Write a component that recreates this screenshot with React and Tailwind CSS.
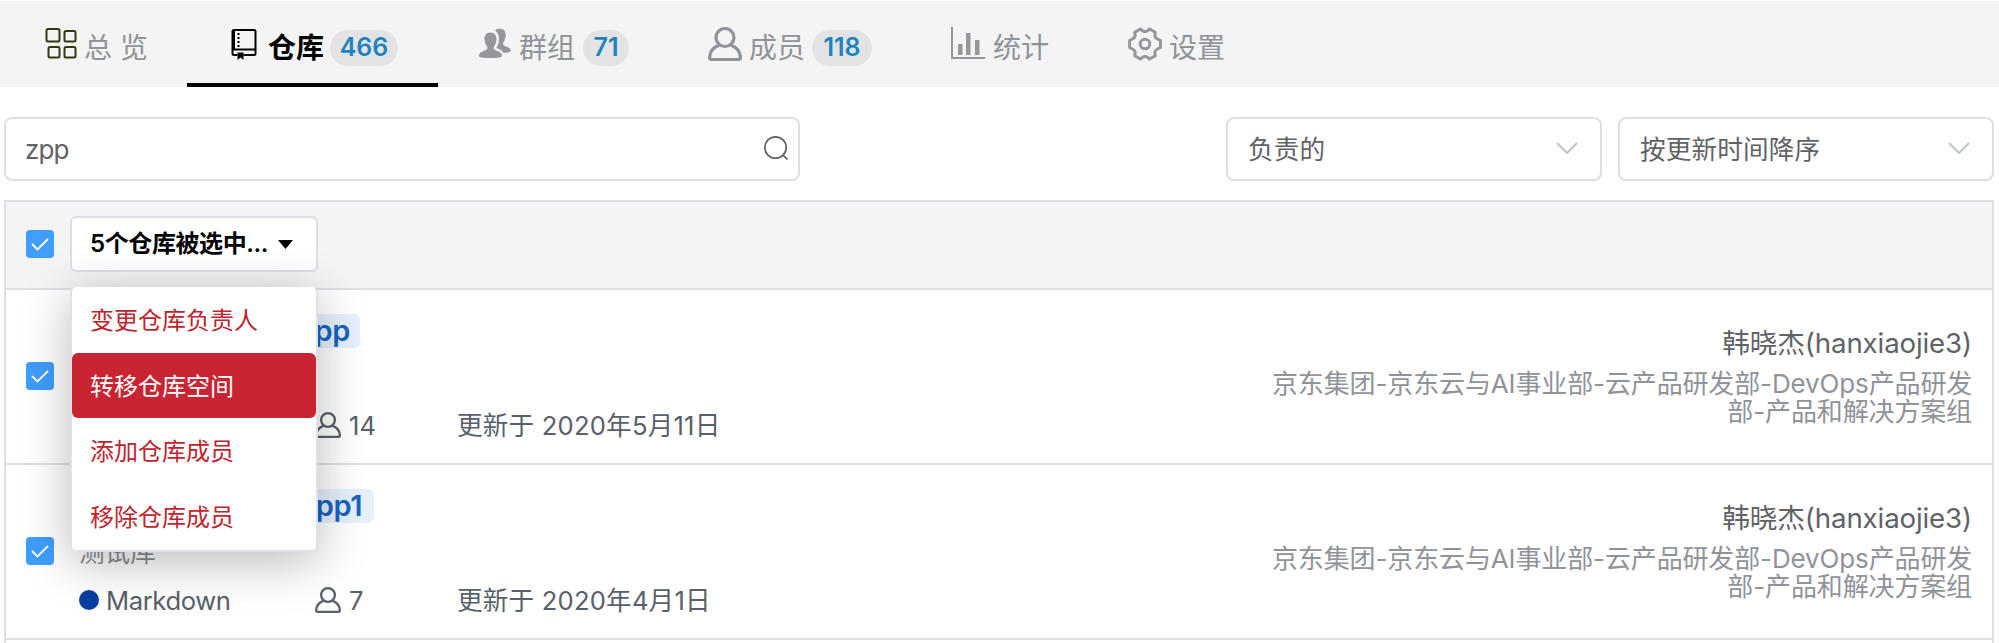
import React from "react";

const PersonIcon = ({ className, strokeWidth }) => (
  <svg className={className} viewBox="0 0 34 34" fill="none" stroke="currentColor" strokeWidth={strokeWidth} strokeLinejoin="round">
    <circle cx="17" cy="10.5" r="9" />
    <path d="M11 18.2C5.8 20 2 24.500 1.500 30.500Q1.500 32.500 3.500 32.500H30.500Q32.500 32.500 32.500 30.500C32 24.500 28.200 20 23 18.200" />
  </svg>
);

const GridIcon = () => (
  <svg className="h-8 w-8 shrink-0" viewBox="0 0 32 32" fill="none" stroke="#37370f" strokeWidth="2">
    <rect x="1.500" y="1" width="13" height="12.500" rx="1.500" />
    <rect x="19.500" y="3" width="11" height="10.500" rx="1.500" />
    <rect x="3.500" y="19" width="11" height="10.500" rx="1.500" />
    <rect x="19.500" y="19" width="11" height="10.500" rx="1.500" />
  </svg>
);

const RepoIcon = () => (
  <svg className="h-8 w-[26px] shrink-0" viewBox="0 0 26 32" fill="none" stroke="#000" strokeWidth="2">
    <path d="M6.500 27H3Q1.500 27 1.500 25.500V3.500Q1.500 2 3 2H23Q24.500 2 24.500 3.500V25.500Q24.500 27 23 27H12.500" />
    <path d="M2.500 2V21" strokeWidth="3" />
    <path d="M1.500 21.500H24.500" strokeWidth="2" />
    <path d="M7.500 5V19" strokeDasharray="2 2" />
    <path d="M6.500 24.500H12.500V32L9.500 29.500L6.500 32Z" fill="#000" stroke="none" />
  </svg>
);

const GroupIcon = () => (
  <svg className="h-8 w-8 shrink-0" viewBox="0 0 32 32" fill="#96979c">
    <path d="M11.500 4.500C7.500 4.500 5.300 7.500 5.500 11.500C5.700 15 7.300 17.500 8.300 19C9 20.500 8 21.800 6 22.500C2.500 23.800 0 25 0 28Q0 30 11.500 30Q23 30 23 28C23 25 20.500 23.800 17 22.500C15 21.800 14 20.500 14.700 19C15.700 17.500 17.300 15 17.500 11.500C17.700 7.500 15.500 4.500 11.500 4.500Z" />
    <path d="M16 2.500C17.500 1.200 19 .8 21 .8C25 .8 27 4 26.700 7.800C26.400 11.200 25 13.500 24.300 15C23.700 16.300 24.600 17.500 26.500 18.200C29.500 19.300 31.800 20.500 31.800 23Q31.500 24.500 24.500 25C23.500 22.500 21.500 21.500 17.300 20C18.800 17.500 20 14.500 20 11C20 7 18.500 4 16 2.500Z" />
  </svg>
);

const ChartIcon = () => (
  <svg className="h-[34px] w-[34px] shrink-0" viewBox="0 0 34 34" fill="#96979c">
    <path d="M0 0H2V30H34V32H0Z" />
    <rect x="7" y="17" width="4.500" height="11" />
    <rect x="15" y="6" width="4.500" height="22" />
    <rect x="24" y="13" width="4.500" height="15" />
  </svg>
);

const GearIcon = () => (
  <svg className="h-[34px] w-[34px] shrink-0" viewBox="0 0 34 34" fill="none" stroke="#96979c" strokeWidth="3" strokeLinejoin="round">
    <path d="M12.300 2L15 4.200Q17 5 19 4.200L21.700 2L27.300 5.200L26.800 8.800Q27.300 11 29.500 12L32.400 13.500V20.500L29.500 22Q27.300 23 26.800 25.200L27.300 28.800L21.700 32L19 29.800Q17 29 15 29.800L12.300 32L6.700 28.800L7.200 25.200Q6.700 23 4.500 22L1.600 20.500V13.500L4.500 12Q6.700 11 7.200 8.800L6.700 5.200Z" />
    <circle cx="17" cy="17" r="4.800" />
  </svg>
);

const Badge = ({ className, children }) => (
  <span className={`mt-[7px] flex h-9 shrink-0 items-center justify-center rounded-full bg-[#e3e3e5] pt-px text-[25px] font-semibold text-[#1f83bd] ${className}`}>
    {children}
  </span>
);

const Checkbox = () => (
  <span className="flex h-7 w-7 shrink-0 items-center justify-center rounded-[4px] bg-[#409eff]">
    <svg className="h-5 w-5" viewBox="0 0 20 20" fill="none" stroke="#fff" strokeWidth="1.8">
      <path d="M2 10L7.500 15.500L18 5" />
    </svg>
  </span>
);

const Select = ({ children }) => (
  <div className="flex h-16 w-[376px] items-center justify-between rounded-lg border-2 border-[#dcdfe6] bg-white pr-[22px] pl-[20px] text-[25.600px] tracking-[0.150px] text-[#606266]">
    <span className="mt-[2px]">{children}</span>
    <svg className="mb-[3px] h-3 w-[22px]" viewBox="0 0 22 12" fill="none" stroke="#c0c4cc" strokeWidth="2">
      <path d="M1 1L11 11L21 1" />
    </svg>
  </div>
);

const MenuItem = ({ active, children }) => (
  <div className={active ? "flex h-[65.700px] items-center rounded-md bg-[#c92432] pt-[2px] pl-[18px] text-white" : "flex h-[65.700px] items-center pt-[2px] pl-[18px] text-[#c0242e]"}>
    {children}
  </div>
);

const RepoRow = ({ nameClass, name, description, language, members, updated }) => (
  <div className="flex h-[175px] shrink-0 border-b-2 border-[#dfe0e6] pl-5">
    <div className="flex w-[53px] shrink-0 items-start pt-[72px]">
      <Checkbox />
    </div>
    <div className="flex w-[700px] shrink-0 flex-col">
      <div className={`mt-6 flex h-[34px] items-center justify-end rounded-md bg-[#e6f1fd] text-[29px] font-semibold tracking-[-0.400px] text-[#1763c6] ${nameClass}`}>
        {name}
      </div>
      <div className="mt-[13px] h-[34px] text-[25.600px] leading-[34px] text-[#8c8e94]">{description}</div>
      <div className="mt-[11px] flex h-10 items-center text-[25.600px] text-[#586069]">
        <div className="flex w-[236px] items-center gap-[7px]">
          {language && (
            <>
              <span className="mb-px h-5 w-5 rounded-full bg-[#053fa1]" />
              <span className="tracking-[-0.400px]">{language}</span>
            </>
          )}
        </div>
        <div className="flex w-[142px] items-center gap-[8px]">
          <PersonIcon className="mb-[2px] h-[26px] w-[26px]" strokeWidth="3" />
          <span>{members}</span>
        </div>
        <span className="tracking-[0.200px] whitespace-nowrap">{updated}</span>
      </div>
    </div>
    <div className="ml-auto w-[720px] pt-[33px] pr-[20px] text-right">
      <div className="h-10 text-[27.700px] leading-10 tracking-[-0.150px] text-[#606266]">韩晓杰(hanxiaojie3)</div>
      <div className="mt-[7px] text-[26px] leading-7 tracking-[-0.130px] text-[#909399]">
        <div className="h-7 whitespace-nowrap">京东集团-京东云与AI事业部-云产品研发部-DevOps产品研发</div>
        <div className="h-7 whitespace-nowrap">部-产品和解决方案组</div>
      </div>
    </div>
  </div>
);

export default function App() {
  return (
    <div className="flex h-[643px] w-[1999px] flex-col overflow-hidden bg-white font-['Inter','Noto_Sans_CJK_SC',sans-serif]">
      <nav className="mt-px flex h-[86px] shrink-0 bg-[#f4f4f4] text-[28px] text-[#909399]">
        <div className="flex w-[187px] items-center pl-[45px]">
          <GridIcon />
          <span className="mt-[7px] ml-[7px] whitespace-nowrap">总 览</span>
        </div>
        <div className="flex w-[251px] items-center border-b-4 border-black pt-1 pl-[44px] text-black">
          <RepoIcon />
          <span className="mt-[7px] ml-[11px] font-bold whitespace-nowrap">仓库</span>
          <Badge className="ml-[6px] w-[68px]">466</Badge>
        </div>
        <div className="flex w-[229px] items-center pl-[41px]">
          <GroupIcon />
          <span className="mt-[7px] ml-2 whitespace-nowrap">群组</span>
          <Badge className="ml-2 w-[46px]">71</Badge>
        </div>
        <div className="flex w-[243px] items-center pl-[41px]">
          <PersonIcon className="h-[34px] w-[34px] shrink-0" strokeWidth="3.2" />
          <span className="mt-[7px] ml-[7px] whitespace-nowrap">成员</span>
          <Badge className="ml-[7px] w-[60px]">118</Badge>
        </div>
        <div className="flex w-[177px] items-center pl-[41px]">
          <ChartIcon />
          <span className="mt-[7px] ml-2 whitespace-nowrap">统计</span>
        </div>
        <div className="flex items-center pl-[41px]">
          <GearIcon />
          <span className="mt-[7px] ml-[7px] whitespace-nowrap">设置</span>
        </div>
      </nav>

      <div className="mt-[30px] flex h-16 shrink-0 items-center pr-[5px] pl-1">
        <div className="flex h-16 w-[796px] items-center justify-between rounded-lg border-2 border-[#dcdfe6] pr-[10px] pl-[19px] text-[26px] tracking-[-0.900px] text-[#606266]">
          <span>zpp</span>
          <svg className="mb-[2px] h-6 w-6" viewBox="0 0 24 24" fill="none" stroke="#606266" strokeWidth="1.7">
            <circle cx="11.500" cy="11.500" r="10.700" />
            <path d="M19 19L23.500 23.500" />
          </svg>
        </div>
        <div className="ml-auto flex gap-4">
          <Select>负责的</Select>
          <Select>按更新时间降序</Select>
        </div>
      </div>

      <div className="mt-[19px] mr-[5px] ml-1 flex h-[480px] shrink-0 flex-col border-2 border-[#dfe0e6]">
        <div className="flex h-[88px] shrink-0 items-center border-b-2 border-[#dfe0e6] bg-[#f4f4f4] pb-[2px] pl-5">
          <Checkbox />
          <div className="relative ml-4 text-2xl">
            <div className="flex h-14 w-[248px] items-center rounded-md border-2 border-[#dcdde5] bg-white pl-[18px] font-semibold text-black">
              <span className="tracking-[-0.400px] whitespace-nowrap">5个仓库被选中...</span>
              <svg className="ml-[10px] h-[9px] w-[15px]" viewBox="0 0 15 9">
                <path d="M0 0H15L7.500 9Z" />
              </svg>
            </div>
            <div className="absolute top-[71px] left-0 z-10 h-[265px] w-[248px] rounded-md border-2 border-t-0 border-[#e0e0ea] bg-white shadow-[0_10px_50px_rgba(0,0,0,0.28)]">
              <MenuItem>变更仓库负责人</MenuItem>
              <MenuItem active>转移仓库空间</MenuItem>
              <MenuItem>添加仓库成员</MenuItem>
              <MenuItem>移除仓库成员</MenuItem>
            </div>
          </div>
        </div>
        <RepoRow name="zpp" nameClass="w-[281px] pr-[10px]" members="14" updated="更新于 2020年5月11日" />
        <RepoRow name="zpp1" nameClass="w-[295px] pr-[12px]" description="测试库" language="Markdown" members="7" updated="更新于 2020年4月1日" />
      </div>
    </div>
  );
}
